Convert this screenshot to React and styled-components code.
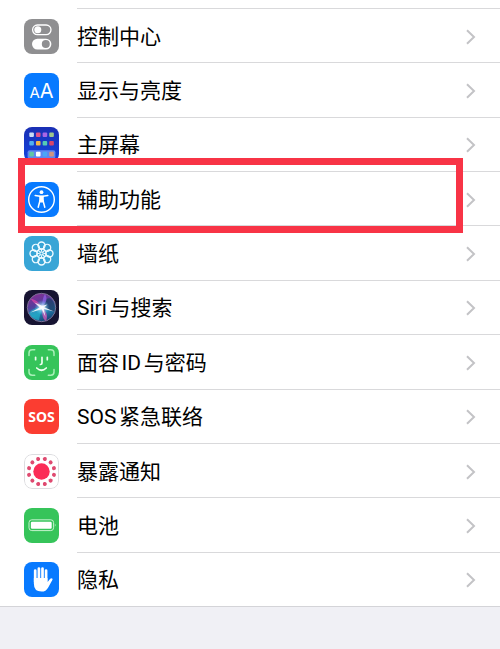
import React from "react";
import styled, { createGlobalStyle, css } from "styled-components";

const GlobalStyle = createGlobalStyle`
    * {
        box-sizing: border-box;
    }

    body {
        margin: 0;
        background: #f0f0f5;
        color: #000;
        font-family: Roboto, "Noto Sans CJK SC", sans-serif;
    }
`;

const Page = styled.main`
    display: flex;
    flex-direction: column;
    min-height: 100vh;
    padding-bottom: 42px;
`;

const SettingsList = styled.ul`
    flex: 1;
    display: grid;
    grid-auto-rows: 1fr;
    margin: 0;
    padding: 8px 0 0;
    list-style: none;
    background: #fff;
    border-bottom: 1px solid #d4d4d8;
`;

const Item = styled.li`
    position: relative;
    display: flex;
    min-height: 54px;

    ${props =>
        props.$highlighted &&
        css`
            &::after {
                content: "";
                position: absolute;
                z-index: 1;
                top: -13px;
                right: 37px;
                bottom: -8px;
                left: 18px;
                border: 7px solid #f83446;
                pointer-events: none;
            }
        `}
`;

const RowLink = styled.a`
    flex: 1;
    display: flex;
    align-items: center;
    gap: 18px;
    padding-left: 24px;
    color: inherit;
    text-decoration: none;
`;

const Icon = styled.svg`
    flex: none;
    width: 35px;
    height: 35px;
    margin-top: 2px;
    border-radius: 8px;
`;

const RowContent = styled.span`
    flex: 1;
    align-self: stretch;
    display: flex;
    align-items: center;
    justify-content: space-between;
    padding: 2px 24px 0 0;
    border-top: 1px solid #d9d9db;
`;

const Label = styled.span`
    font-size: 21px;
    line-height: 28px;
    text-autospace: normal;
`;

const Chevron = styled.svg`
    flex: none;
    width: 10px;
    height: 16px;
    fill: none;
    stroke: #c3c3c6;
    stroke-width: 2;
`;

const Glyph = ({ children }) => (
    <Icon viewBox="0 0 35 35" aria-hidden="true">
        {children}
    </Icon>
);

const ControlIcon = () => (
    <Glyph>
        <rect width="35" height="35" fill="#8f8f91" />
        <rect x="8.6" y="6" width="18.4" height="9.6" rx="4.8" fill="none" stroke="#fff" strokeWidth="1.3" />
        <circle cx="13.8" cy="10.8" r="3.5" fill="#fff" />
        <rect x="8" y="19.7" width="19.4" height="10.8" rx="5.4" fill="#fff" />
        <circle cx="21.8" cy="25.1" r="4" fill="#8f8f91" />
    </Glyph>
);

const DisplayIcon = () => (
    <Glyph>
        <rect width="35" height="35" fill="#087aff" />
        <g fill="#fff" fontFamily="Inter, sans-serif" fontWeight="400">
            <text x="5.4" y="24.8" fontSize="15">A</text>
            <text x="15.8" y="24.8" fontSize="20">A</text>
        </g>
    </Glyph>
);

const appTiles = [
    ["#c9dcf4", "#e2558c", "#a865e6", "#9fc58c"],
    ["#4fb0f2", "#f3b54a", "#55cbb4", "#d8456a"],
    ["#62c7a4", "#ffffff", "#4aa6f5", "#cf9480"]
];

const HomeIcon = () => (
    <Glyph>
        <defs>
            <linearGradient id="home" x1="0" y1="0" x2="0" y2="1">
                <stop offset="0" stopColor="#1a2fb4" />
                <stop offset="1" stopColor="#1245e0" />
            </linearGradient>
        </defs>
        <rect width="35" height="35" fill="url(#home)" />
        <rect x="3.6" y="23.3" width="27.8" height="8.4" rx="2" fill="#5f86f0" />
        {appTiles.map((row, y) =>
            row.map((color, x) => (
                <rect
                    key={`${x}-${y}`}
                    x={5.3 + x * 6.65}
                    y={[5.4, 14, 24.8][y]}
                    width="4.6"
                    height="4.6"
                    rx="1"
                    fill={color}
                />
            ))
        )}
    </Glyph>
);

const AccessibilityIcon = () => (
    <Glyph>
        <rect width="35" height="35" fill="#087aff" />
        <circle cx="17.5" cy="17.5" r="12.8" fill="none" stroke="#fff" strokeWidth="1.4" />
        <circle cx="17.5" cy="10.2" r="1.9" fill="#fff" />
        <path
            d="M11.2 13.5 L16 14.3 H19 L23.8 13.5 M16 18.5 L14.2 25.2 M19 18.5 L20.8 25.2"
            fill="none"
            stroke="#fff"
            strokeWidth="1.5"
            strokeLinecap="round"
            strokeLinejoin="round"
        />
        <path d="M15.2 13.8 H19.8 V19.2 L18.6 20.4 H16.4 L15.2 19.2 Z" fill="#fff" />
    </Glyph>
);

const petals = [0, 45, 90, 135, 180, 225, 270, 315];

const WallpaperIcon = () => (
    <Glyph>
        <rect width="35" height="35" fill="#38a5d6" />
        <g fill="none" stroke="#eefaff" strokeWidth="1.4">
            {petals.map(angle => (
                <g key={angle} transform={`rotate(${angle} 17.5 17.5)`}>
                    <circle cx="17.5" cy="9.5" r="3.5" />
                    <path d="M17.5 13 V15.2" strokeWidth="1" />
                </g>
            ))}
            <circle cx="17.5" cy="17.5" r="4.4" strokeWidth="1" />
            <circle cx="17.5" cy="17.5" r="1.7" strokeWidth="1.2" />
        </g>
    </Glyph>
);

const SiriIcon = () => (
    <Glyph>
        <defs>
            <linearGradient id="siri-orb" x1="0.2" y1="0" x2="0.6" y2="1">
                <stop offset="0" stopColor="#8c2c94" />
                <stop offset="0.4" stopColor="#563e9c" />
                <stop offset="0.7" stopColor="#227fae" />
                <stop offset="1" stopColor="#173f72" />
            </linearGradient>
            <radialGradient id="siri-glow">
                <stop offset="0" stopColor="#fff" />
                <stop offset="0.3" stopColor="#c9ecff" stopOpacity="0.75" />
                <stop offset="1" stopColor="#4cc5ee" stopOpacity="0" />
            </radialGradient>
        </defs>
        <rect width="35" height="35" fill="#171432" />
        <circle cx="17.5" cy="17.5" r="14.2" fill="url(#siri-orb)" stroke="#7b7194" strokeWidth="1" />
        <path d="M18 17 C20 9 25 6 28 10 C32 15 31 20 30 22 Z" fill="#203c66" opacity="0.75" />
        <path d="M18 17 C12 17 7 20 5 23 C8 29 13 30 15 30 Z" fill="#23bdd2" opacity="0.6" />
        <path d="M18 17 C14 11 10 9 7 9 C10 14 14 16 18 17 Z" fill="#f14bad" opacity="0.6" />
        <path d="M18 17 C18 12 19 7 21 4 C24 9 22 13 18 17 Z" fill="#8f5ee2" opacity="0.8" />
        <path d="M18 17 C23 22 24 26 22 31 C18 29 18 22 18 17 Z" fill="#d557ba" opacity="0.75" />
        <circle cx="18" cy="17.5" r="7.5" fill="url(#siri-glow)" />
        <path
            d="M10.5 12.5 L18 15.8 L23.5 14.6 L20.3 17.2 L30 21.6 L19.8 19 L21.5 27 L17.8 19.2 L6.5 22.6 L15.6 17.6 Z"
            fill="#fff"
            opacity="0.85"
        />
    </Glyph>
);

const FaceIdIcon = () => (
    <Glyph>
        <rect width="35" height="35" fill="#36c45a" />
        <g fill="none" strokeLinecap="round">
            <path
                d="M5 10.5 V8 Q5 4.8 8.2 4.8 H10.7 M24.3 4.8 H26.8 Q30 4.8 30 8 V10.5 M30 24.5 V27 Q30 30.2 26.8 30.2 H24.3 M10.7 30.2 H8.2 Q5 30.2 5 27 V24.5"
                stroke="#a9efb8"
                strokeWidth="1.5"
            />
            <path
                d="M11.6 12.3 V14.7 M23.3 12.3 V14.7 M18 12.3 V18 Q18 19.5 16.4 19.5 M12.7 23 Q17.5 27.5 22.3 23"
                stroke="#effff1"
                strokeWidth="1.7"
            />
        </g>
    </Glyph>
);

const SosIcon = () => (
    <Glyph>
        <rect width="35" height="35" fill="#fb3d31" />
        <text
            x="17.5"
            y="22.6"
            textAnchor="middle"
            fill="#fff"
            fontFamily='"Noto Sans", sans-serif'
            fontSize="14"
            fontWeight="700"
        >
            SOS
        </text>
    </Glyph>
);

const dots = Array.from({ length: 12 }, (_, i) => 15 + i * 30);

const ExposureIcon = () => (
    <Glyph>
        <rect x="0.5" y="0.5" width="34" height="34" rx="7.5" fill="#fff" stroke="#dddde0" />
        <circle cx="17.5" cy="17.5" r="8.2" fill="#fb2d57" />
        {dots.map(angle => (
            <circle
                key={angle}
                cx="17.5"
                cy="4.6"
                r="2"
                fill="#df4a70"
                transform={`rotate(${angle} 17.5 17.5)`}
            />
        ))}
    </Glyph>
);

const BatteryIcon = () => (
    <Glyph>
        <rect width="35" height="35" fill="#36c45a" />
        <rect x="5" y="11.8" width="24.6" height="10.8" rx="2.8" fill="none" stroke="#c4f2cd" strokeWidth="1" />
        <rect x="6.9" y="13.7" width="20.8" height="7" rx="1.2" fill="#fff" />
        <path d="M30.9 15.6 Q32.3 17.2 30.9 18.8 Z" fill="#d9f7df" />
    </Glyph>
);

const PrivacyIcon = () => (
    <Glyph>
        <rect width="35" height="35" fill="#087aff" />
        <path
            d="M11.2 8.6 V20 M14.9 6.6 V18 M18.5 6.6 V18 M22.1 8.6 V20"
            stroke="#fff"
            strokeWidth="2.7"
            strokeLinecap="round"
        />
        <path
            d="M9.85 16 H23.45 V20.3 L26 17 Q27.3 15.7 28.5 16.7 Q28.8 17.2 28.2 18.3 L24.2 25.4 Q22 29.6 17.5 29.6 Q9.85 29.6 9.85 21.5 Z"
            fill="#fff"
        />
    </Glyph>
);

const settings = [
    { label: "控制中心", icon: ControlIcon },
    { label: "显示与亮度", icon: DisplayIcon },
    { label: "主屏幕", icon: HomeIcon },
    { label: "辅助功能", icon: AccessibilityIcon, highlighted: true },
    { label: "墙纸", icon: WallpaperIcon },
    { label: "Siri与搜索", icon: SiriIcon },
    { label: "面容ID与密码", icon: FaceIdIcon },
    { label: "SOS紧急联络", icon: SosIcon },
    { label: "暴露通知", icon: ExposureIcon },
    { label: "电池", icon: BatteryIcon },
    { label: "隐私", icon: PrivacyIcon }
];

const SettingsRow = ({ label, icon: RowIcon, highlighted }) => (
    <Item $highlighted={highlighted}>
        <RowLink href="#">
            <RowIcon />
            <RowContent>
                <Label>{label}</Label>
                <Chevron viewBox="0 0 10 16" aria-hidden="true">
                    <path d="M1 1.2 L8 8 L1 14.8" />
                </Chevron>
            </RowContent>
        </RowLink>
    </Item>
);

const App = () => (
    <>
        <GlobalStyle />
        <Page lang="zh-CN">
            <SettingsList>
                {settings.map(setting => (
                    <SettingsRow key={setting.label} {...setting} />
                ))}
            </SettingsList>
        </Page>
    </>
);

export default App;
